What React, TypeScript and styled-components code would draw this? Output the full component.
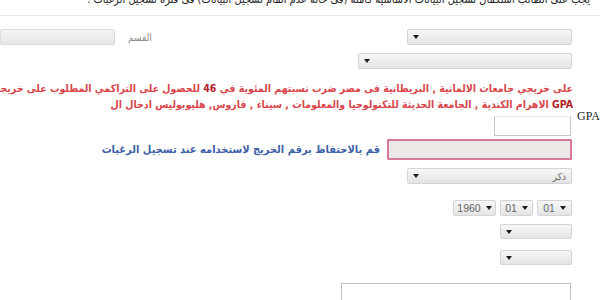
import { styled, createGlobalStyle } from 'styled-components'

const GlobalStyle = createGlobalStyle`
  html, body {
    margin: 0;
    padding: 0;
    background: #ffffff;
    overflow: hidden;
  }
  body {
    font-family: 'DejaVu Sans Condensed', 'DejaVu Sans', 'Liberation Sans', sans-serif;
  }
`

const Page = styled.div`
  direction: rtl;
  width: 600px;
  height: 300px;
  overflow: hidden;
`

const TopNote = styled.div`
  margin-top: -8px;
  padding-right: 10px;
  font-size: 11px;
  line-height: 16px;
  color: #222;
  white-space: nowrap;
  height: 16px;
`

const Rule = styled.div`
  height: 1px;
  background: #e6e6e6;
  margin-top: 7px;
`

const Row = styled.div<{ $top: number }>`
  display: grid;
  grid-template-columns: 28px 1fr;
  margin-top: ${({ $top }) => $top}px;
`

const Label = styled.div`
  direction: ltr;
  text-align: left;
  padding-left: 5px;
  margin-top: -7px;
  font-family: 'Liberation Serif', serif;
  font-size: 12px;
  line-height: 14px;
  color: #222;
  white-space: nowrap;
`

const Field = styled.div`
  display: flex;
  align-items: center;
  gap: 4px;
  min-width: 0;
`

const Select = styled.div<{ $w: number; $h?: number; $ltr?: boolean }>`
  box-sizing: border-box;
  width: ${({ $w }) => $w}px;
  height: ${({ $h }) => $h ?? 16}px;
  display: flex;
  flex-direction: ${({ $ltr }) => ($ltr ? 'row-reverse' : 'row')};
  align-items: center;
  justify-content: ${({ $ltr }) => ($ltr ? 'center' : 'space-between')};
  gap: 5px;
  padding: 0 5px;
  border: 1px solid #d4d4d4;
  border-radius: 2px;
  background: linear-gradient(#f7f7f7, #e4e4e4);
  font-size: 10px;
  color: #666;
  flex-shrink: 0;
`

const Arrow = styled.span`
  width: 0;
  height: 0;
  border-left: 3px solid transparent;
  border-right: 3px solid transparent;
  border-top: 4px solid #1a1a1a;
`

const SideGroup = styled.div`
  display: flex;
  align-items: center;
  gap: 13px;
  margin-right: auto;
`

const SideLabel = styled.span`
  font-size: 10px;
  color: #888;
`

const TextBox = styled.div<{ $w: number }>`
  box-sizing: border-box;
  width: ${({ $w }) => $w}px;
  height: 16px;
  border: 1px solid #dcdcdc;
  border-radius: 2px;
  background: linear-gradient(#f4f4f4, #e6e6e6);
`

const Note = styled.div`
  margin-top: 11px;
  padding-right: 27px;
  font-size: 10.5px;
  font-weight: bold;
  line-height: 16px;
  color: #d9464b;
  white-space: nowrap;

  b {
    color: #b0202a;
  }
`

const GpaInput = styled.div`
  box-sizing: border-box;
  width: 77px;
  height: 20px;
  margin-right: 1px;
  border: 1px solid #c9c9c9;
  border-top-color: #ececec;
  background: #fff;
`

const GradInput = styled.div`
  box-sizing: border-box;
  width: 185px;
  height: 21px;
  border: 2px solid #d77a97;
  border-radius: 1px;
  background: #ebe8e5;
  flex-shrink: 0;
`

const Hint = styled.span`
  margin-right: 3px;
  font-size: 11px;
  font-weight: bold;
  color: #3d5fa8;
  white-space: nowrap;
`

const DateText = styled.span`
  direction: ltr;
  font-family: 'Liberation Sans', sans-serif;
  font-size: 10.5px;
  color: #666;
`

const TextArea = styled.div`
  box-sizing: border-box;
  width: 230px;
  height: 40px;
  margin-right: 1px;
  border: 1px solid #bdbdbd;
  background: #fff;
`

export default function App() {
  return (
    <Page>
      <GlobalStyle />
      <TopNote>
        يجب على الطالب استكمال تسجيل البيانات الاساسية كاملة (فى حالة عدم اتمام تسجيل البيانات) فى فترة تسجيل الرغبات .
      </TopNote>
      <Rule />

      <Row $top={13}>
        <span />
        <Field>
          <Select $w={165}>
            <span />
            <Arrow />
          </Select>
          <SideGroup>
            <SideLabel>القسم</SideLabel>
            <TextBox $w={115} />
          </SideGroup>
        </Field>
      </Row>

      <Row $top={8}>
        <span />
        <Field>
          <Select $w={214}>
            <span />
            <Arrow />
          </Select>
        </Field>
      </Row>

      <Note>
        <div>
          على خريجي جامعات الالمانية , البريطانية فى مصر ضرب نسبتهم المئوية في <b>46</b> للحصول على التراكمي المطلوب على خريجي جامعات
        </div>
        <div>
          <b>GPA</b> الاهرام الكندية , الجامعة الحديثة للتكنولوجيا والمعلومات , سيناء , فاروس, هليوبوليس ادخال ال
        </div>
      </Note>

      <Row $top={4}>
        <Label>GPA</Label>
        <Field>
          <GpaInput />
        </Field>
      </Row>

      <Row $top={3}>
        <span />
        <Field>
          <GradInput />
          <Hint>قم بالاحتفاظ برقم الخريج لاستخدامه عند تسجيل الرغبات</Hint>
        </Field>
      </Row>

      <Row $top={8}>
        <span />
        <Field>
          <Select $w={165}>
            <span>ذكر</span>
            <Arrow />
          </Select>
        </Field>
      </Row>

      <Row $top={16}>
        <span />
        <Field>
          <Select $w={35} $ltr>
            <DateText>01</DateText>
            <Arrow />
          </Select>
          <Select $w={33} $ltr>
            <DateText>01</DateText>
            <Arrow />
          </Select>
          <Select $w={43} $ltr>
            <DateText>1960</DateText>
            <Arrow />
          </Select>
        </Field>
      </Row>

      <Row $top={8}>
        <span />
        <Field>
          <Select $w={72} $h={15}>
            <span />
            <Arrow />
          </Select>
        </Field>
      </Row>

      <Row $top={11}>
        <span />
        <Field>
          <Select $w={72} $h={15}>
            <span />
            <Arrow />
          </Select>
        </Field>
      </Row>

      <Row $top={18}>
        <span />
        <Field>
          <TextArea />
        </Field>
      </Row>
    </Page>
  )
}
